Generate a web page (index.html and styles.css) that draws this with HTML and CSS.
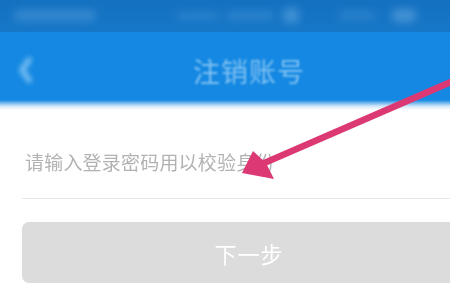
FILE: index.html
```html
<!DOCTYPE html>
<html lang="zh">
<head>
<meta charset="utf-8">
<title>注销账号</title>
<link rel="stylesheet" href="styles.css">
</head>
<body>
<div class="screen">
  <div class="status">
    <span class="blob b1"></span>
    <span class="blob b2"></span>
    <span class="blob b3"></span>
    <span class="blob b4"></span>
    <span class="blob b5"></span>
    <span class="blob b6"></span>
  </div>
  <div class="nav">
    <svg class="back" width="20" height="30" viewBox="0 0 20 30"><path d="M14 5 L7 15 L14 25" fill="none" stroke="#86c6f4" stroke-width="6" stroke-linecap="round" stroke-linejoin="round"/></svg>
    <div class="title">注销账号</div>
  </div>
  <div class="fade"></div>
  <div class="content">
    <div class="field"><span class="placeholder">请输入登录密码用以校验身份</span></div>
    <div class="btn">下一步</div>
  </div>
  <svg class="pointer" width="450" height="300" viewBox="0 0 450 300">
    <line x1="460" y1="78" x2="262" y2="164" stroke="#dc3874" stroke-width="6.5" stroke-linecap="round"/>
    <polygon points="242,173 253,151 266,163 274,179" fill="#dc3874"/>
  </svg>
</div>
</body>
</html>
```
FILE: styles.css
```css
html, body {
  margin: 0;
  padding: 0;
  width: 450px;
  height: 300px;
  overflow: hidden;
  background: #ffffff;
}
.screen {
  position: relative;
  width: 498px;
  height: 300px;
  font-family: "Noto Sans CJK SC", "Noto Sans", sans-serif;
}
.status {
  position: relative;
  height: 32px;
  background: linear-gradient(#1470c0, #1677c8);
}
.blob {
  position: absolute;
  background: rgba(140, 195, 240, 0.5);
  filter: blur(4px);
  border-radius: 5px;
}
.b1 { left: 14px; top: 10px; width: 82px; height: 11px; opacity: 0.55; }
.b2 { left: 176px; top: 12px; width: 44px; height: 8px; opacity: 0.35; }
.b3 { left: 226px; top: 11px; width: 48px; height: 9px; opacity: 0.4; }
.b4 { left: 283px; top: 8px; width: 16px; height: 15px; opacity: 0.75; }
.b5 { left: 338px; top: 11px; width: 38px; height: 9px; opacity: 0.35; }
.b6 { left: 392px; top: 9px; width: 24px; height: 13px; opacity: 0.8; }
.nav {
  position: relative;
  height: 68px;
  background: #1488e2;
  display: flex;
  align-items: center;
  justify-content: center;
}
.back {
  position: absolute;
  left: 15px;
  top: 23px;
  opacity: 0.8;
  filter: blur(2.5px);
}
.title {
  font-size: 27px;
  letter-spacing: 1px;
  color: rgba(175, 218, 250, 0.7);
  filter: blur(1.2px);
  margin-top: 8px;
}
.fade {
  height: 10px;
  background: linear-gradient(#1488e2, #cfe6f8 60%, #ffffff);
}
.content {
  padding: 0 22px;
}
.field {
  height: 89px;
  display: flex;
  align-items: flex-end;
  padding-bottom: 24px;
  box-sizing: border-box;
  border-bottom: 1px solid #e8e8e8;
}
.placeholder {
  padding-left: 3px;
  font-size: 19px;
  line-height: 24px;
  letter-spacing: 0.2px;
  color: #b2b2b2;
  filter: blur(0.5px);
}
.btn {
  margin-top: 23px;
  height: 61px;
  border-radius: 7px;
  background: #dcdcdc;
  color: #ffffff;
  font-size: 22px;
  letter-spacing: 1px;
  display: flex;
  align-items: center;
  justify-content: center;
  filter: blur(0.4px);
}
.pointer {
  position: absolute;
  left: 0;
  top: 0;
  filter: blur(0.5px);
}
```
